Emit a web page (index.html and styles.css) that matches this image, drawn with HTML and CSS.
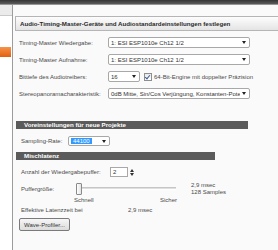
FILE: index.html
```html
<!DOCTYPE html>
<html lang="de">
<head>
  <meta charset="UTF-8">
  <title>Audio-Einstellungen</title>
  <link rel="stylesheet" href="styles.css">
</head>
<body>

  <div class="topbar"></div>

  <div class="main">
    <!-- linke Navigationsleiste -->
    <div class="sidebar">
      <div class="side-head"></div>
      <div class="side-item"></div>
    </div>

    <div class="content">
      <div class="title">Audio-Timing-Master-Geräte und Audiostandardeinstellungen festlegen</div>

      <div class="form">
        <div class="row">
          <span class="lbl">Timing-Master Wiedergabe:</span>
          <div class="combo wide"><span class="val">1: ESI ESP1010e Ch12 1/2</span><i class="arrow"></i></div>
        </div>
        <div class="row">
          <span class="lbl">Timing-Master Aufnahme:</span>
          <div class="combo wide"><span class="val">1: ESI ESP1010e Ch12 1/2</span><i class="arrow"></i></div>
        </div>
        <div class="row">
          <span class="lbl">Bittiefe des Audiotreibers:</span>
          <div class="combo small"><span class="val">16</span><i class="arrow"></i></div>
          <span class="check"></span>
          <span class="check-lbl">64-Bit-Engine mit doppelter Präzision</span>
        </div>
        <div class="row">
          <span class="lbl">Stereopanoramacharakteristik:</span>
          <div class="combo wide"><span class="val">0dB Mitte, Sin/Cos Verjüngung, Konstanten-Poter</span><i class="arrow"></i></div>
        </div>
      </div>

      <div class="section long">Voreinstellungen für neue Projekte</div>

      <div class="row sub sampling">
        <span class="lbl rate-lbl">Sampling-Rate:</span>
        <div class="combo rate"><span class="val"><span class="sel">44100</span></span><i class="arrow"></i></div>
      </div>

      <div class="section short">Mischlatenz</div>

      <div class="row sub buffers">
        <span class="lbl buf-lbl">Anzahl der Wiedergabepuffer:</span>
        <div class="spin">2</div>
        <div class="spin-btns"><i class="up"></i><i class="down"></i></div>
      </div>

      <div class="row sub size">
        <span class="lbl size-lbl">Puffergröße:</span>
        <div class="slider">
          <div class="track"></div>
          <div class="thumb"></div>
        </div>
        <div class="values">
          <div>2,9 msec</div>
          <div>128 Samples</div>
        </div>
      </div>

      <div class="scale">
        <span class="fast">Schnell</span>
        <span>Sicher</span>
      </div>

      <div class="row sub latency">
        <span class="lbl lat-lbl">Effektive Latenzzeit bei</span>
        <span>2,9 msec</span>
      </div>

      <button class="btn">Wave-Profiler...</button>
    </div>
  </div>

</body>
</html>
```

FILE: styles.css
```css
body {
    margin: 0;
    width: 278px;
    height: 250px;
    overflow: hidden;
    font-family: "Liberation Sans", Arial, sans-serif;
    font-size: 6px;
    color: #4a4a4a;
    background: #fafafa;
}
.topbar {
    height: 5px;
    background: linear-gradient(#343434, #5c5c5c 80%, #cfcfcf);
}
.main {
    display: flex;
    height: 245px;
}
.sidebar {
    width: 12px;
    background: #fff;
    border-right: 1px solid #9c9c9c;
}
.side-head {
    height: 10px;
    background: #ebebeb;
    border-bottom: 1px solid #c9c9c9;
}
.side-item {
    margin-top: 31px;
    height: 10px;
    width: 11px;
    background: linear-gradient(#f6934a, #e2600f);
}
.content {
    flex: 1;
    padding-left: 2px;
}
.title {
    margin-top: 11px;
    height: 13px;
    line-height: 13px;
    padding-left: 4px;
    border: 1px solid #b5b5b5;
    border-right: none;
    background: linear-gradient(#fdfdfd, #e4e4e4);
    font-size: 6.2px;
    font-weight: bold;
    color: #2a2a2a;
    white-space: nowrap;
}
.form {
    margin-top: 3px;
    padding-left: 4px;
}
.row {
    display: flex;
    align-items: center;
    height: 17px;
    white-space: nowrap;
}
.lbl {
    width: 89px;
    flex: none;
}
.combo {
    display: flex;
    align-items: center;
    height: 11px;
    border: 1px solid #a8a8a8;
    border-radius: 2px;
    background: #fff;
    color: #333;
    box-sizing: border-box;
}
.combo .val {
    flex: 1;
    overflow: hidden;
    padding-left: 2px;
}
.arrow {
    flex: none;
    width: 0;
    height: 0;
    margin: 0 3px 0 2px;
    border-left: 2px solid transparent;
    border-right: 2px solid transparent;
    border-top: 3px solid #222;
}
.wide {
    width: 142px;
}
.small {
    width: 32px;
}
.check {
    width: 6px;
    height: 6px;
    margin-left: 4px;
    border: 1px solid #8e8e8e;
    background: linear-gradient(#e8e8e8, #fff);
    position: relative;
}
.check::after {
    content: "";
    position: absolute;
    left: 1px;
    top: 0;
    width: 2px;
    height: 4px;
    border-right: 1px solid #3a5f9a;
    border-bottom: 1px solid #3a5f9a;
    transform: rotate(40deg);
}
.check-lbl {
    margin-left: 2px;
}
.section {
    margin-left: 1px;
    height: 8px;
    line-height: 8px;
    padding-left: 8px;
    background: #5b5b5b;
    color: #fff;
    font-size: 6.2px;
    font-weight: bold;
    box-sizing: border-box;
}
.section.long {
    margin-top: 19px;
    width: 232px;
}
.section.short {
    margin-top: 5px;
    width: 199px;
}
.sub {
    padding-left: 6px;
}
.sampling {
    margin-top: 6px;
    height: 12px;
}
.rate-lbl {
    width: 47px;
}
.combo.rate {
    width: 42px;
    height: 10px;
}
.sel {
    background: #3399ff;
    color: #fff;
    padding: 0 2px;
}
.buffers {
    margin-top: 7px;
    height: 10px;
}
.spin {
    width: 18px;
    height: 10px;
    line-height: 8px;
    padding-left: 2px;
    border: 1px solid #a8a8a8;
    background: #fff;
    color: #333;
    box-sizing: border-box;
}
.spin-btns {
    display: flex;
    flex-direction: column;
    gap: 1px;
    margin-left: 2px;
}
.spin-btns i {
    width: 0;
    height: 0;
    border-left: 2px solid transparent;
    border-right: 2px solid transparent;
}
.spin-btns .up {
    border-bottom: 3px solid #333;
}
.spin-btns .down {
    border-top: 3px solid #333;
}
.size {
    margin-top: 4px;
    height: 15px;
}
.size-lbl {
    width: 55px;
}
.slider {
    position: relative;
    width: 100px;
    height: 15px;
}
.track {
    margin-top: 6px;
    margin-left: 1px;
    height: 1px;
    border-top: 1px solid #c6c6c6;
    border-bottom: 1px solid #fff;
    background: #dedede;
}
.thumb {
    position: absolute;
    left: 0;
    top: 2px;
    width: 4px;
    height: 10px;
    border: 1px solid #8a8a8a;
    border-radius: 1px;
    background: linear-gradient(90deg, #fff, #e3e3e3);
}
.values {
    margin-left: 15px;
    line-height: 6.5px;
}
.scale {
    display: flex;
    height: 8px;
    line-height: 8px;
    padding-left: 59px;
    white-space: nowrap;
}
.fast {
    width: 86px;
}
.latency {
    margin-top: 1px;
    height: 9px;
}
.lat-lbl {
    width: 107px;
}
.btn {
    display: block;
    margin: 4px 0 0 4px;
    width: 51px;
    height: 13px;
    padding: 0;
    border: 1px solid #7a7a7a;
    border-radius: 2px;
    background: linear-gradient(#f6f6f6, #dcdcdc);
    font-family: "Liberation Sans", Arial, sans-serif;
    font-size: 6px;
    color: #333;
}
```
